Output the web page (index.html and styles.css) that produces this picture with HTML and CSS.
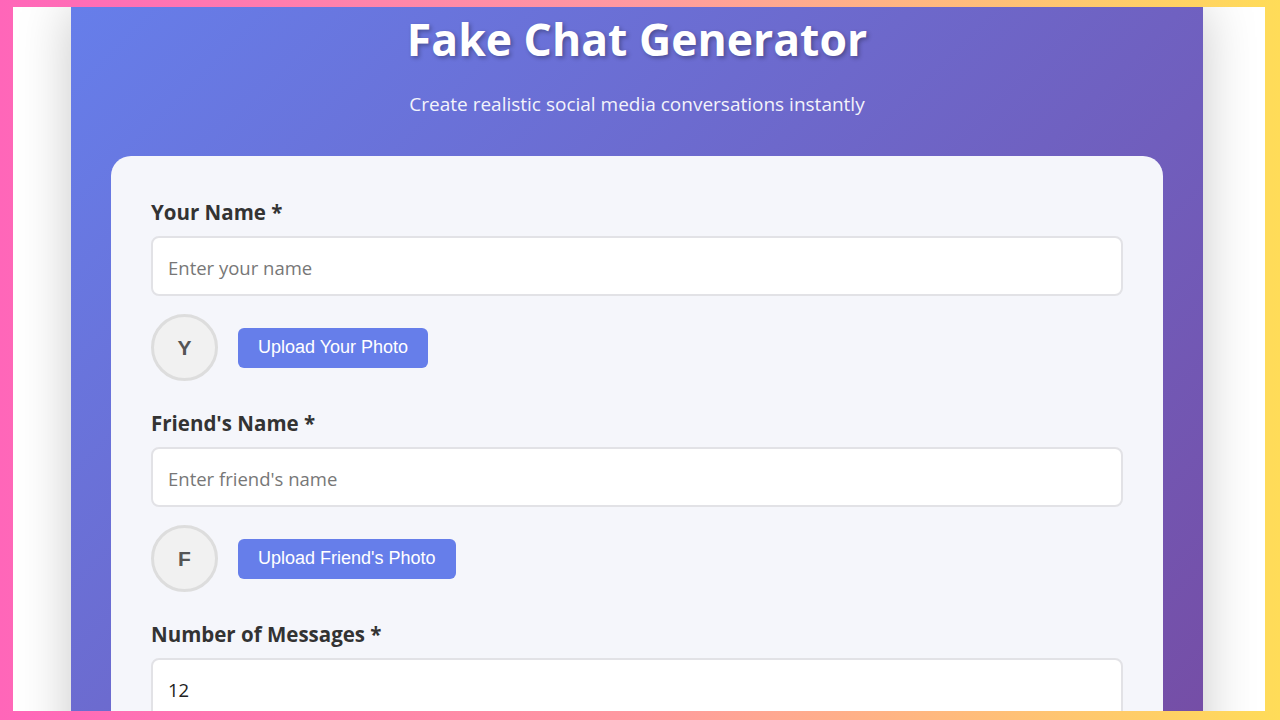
FILE: index.html
```html
<!DOCTYPE html>
<html lang="en">
<head>
<meta charset="utf-8">
<title>Fake Chat Generator</title>
<link rel="stylesheet" href="styles.css">
</head>
<body>
<div class="frame">
  <div class="page">
    <main class="panel">
      <header class="hero">
        <h1 class="title">Fake Chat Generator</h1>
        <p class="subtitle">Create realistic social media conversations instantly</p>
      </header>
      <section class="card">
        <div class="group">
          <label class="label" for="yourName">Your Name *</label>
          <input class="input" id="yourName" type="text" placeholder="Enter your name">
          <div class="avatar-row">
            <div class="avatar">Y</div>
            <button class="upload" type="button">Upload Your Photo</button>
          </div>
        </div>
        <div class="group">
          <label class="label" for="friendName">Friend's Name *</label>
          <input class="input" id="friendName" type="text" placeholder="Enter friend's name">
          <div class="avatar-row">
            <div class="avatar">F</div>
            <button class="upload" type="button">Upload Friend's Photo</button>
          </div>
        </div>
        <div class="group">
          <label class="label" for="count">Number of Messages *</label>
          <input class="input" id="count" type="text" value="12">
        </div>
      </section>
    </main>
  </div>
</div>
</body>
</html>
```
FILE: styles.css
```css
* { box-sizing: border-box; }
html, body { margin: 0; height: 100%; }
body {
  font-family: "Open Sans", Lato, sans-serif;
  overflow: hidden;
}
.frame {
  height: 720px;
  padding: 7px 15px 9px 13px;
  background: linear-gradient(90deg, #ff66b9 0%, #ff9aa0 50%, #ffdc58 100%);
}
.page {
  height: 100%;
  background: #ffffff;
  overflow: hidden;
  padding-left: 58px;
}
.panel {
  width: 1132px;
  min-height: 100%;
  padding: 0 40px 40px;
  background: linear-gradient(135deg, #667eea 0%, #764ba2 100%);
  box-shadow: 0 0 50px rgba(0, 0, 0, 0.22);
}
.hero {
  text-align: center;
  color: #ffffff;
  padding-top: 5px;
}
.title {
  margin: 0;
  font-size: 44.5px;
  line-height: 53px;
  font-weight: 700;
  text-shadow: 2px 2px 4px rgba(0, 0, 0, 0.3);
}
.subtitle {
  margin: 26px 0 0;
  font-size: 19px;
  line-height: 26px;
  opacity: 0.92;
}
.card {
  margin-top: 39px;
  background: #f5f6fb;
  border-radius: 20px;
  padding: 44px 40px 40px;
}
.group { margin-bottom: 30px; }
.label {
  display: block;
  font-size: 20.5px;
  line-height: 25px;
  font-weight: 700;
  color: #333333;
  margin-bottom: 11px;
}
.input {
  display: block;
  width: 100%;
  height: 60px;
  padding: 2px 15px 0;
  border: 2px solid #e2e2e6;
  border-radius: 8px;
  background: #ffffff;
  font-family: "Open Sans", Lato, sans-serif;
  font-size: 18.5px;
  color: #222222;
  outline: none;
}
.input::placeholder { color: #777777; }
.avatar-row {
  display: flex;
  align-items: center;
  gap: 20px;
  margin-top: 18px;
}
.avatar {
  width: 67px;
  height: 67px;
  border-radius: 50%;
  background: #f1f1f1;
  border: 3px solid #dddddd;
  display: flex;
  align-items: center;
  justify-content: center;
  font-family: "Liberation Sans", Arial, sans-serif;
  font-weight: 700;
  font-size: 21px;
  color: #555555;
}
.upload {
  height: 40px;
  padding: 0 20px;
  border: none;
  border-radius: 6px;
  background: #667eea;
  color: #ffffff;
  font-family: "Liberation Sans", Arial, sans-serif;
  font-size: 18px;
  cursor: pointer;
}
```
